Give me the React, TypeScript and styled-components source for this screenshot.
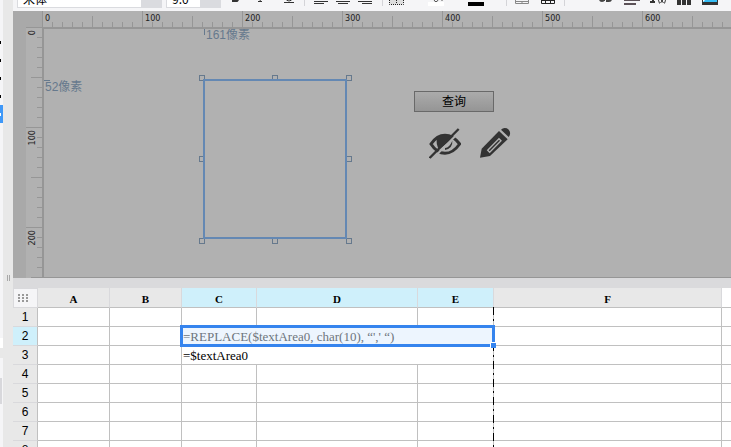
import React from "react";
import styled, { createGlobalStyle, css } from "styled-components";

const GlobalStyle = createGlobalStyle`
  *, *::before, *::after { box-sizing: border-box; }
  body {
    margin: 0;
    overflow: hidden;
    background: #f5f5f7;
    font-family: "Liberation Serif", "Noto Sans CJK SC", serif;
    font-size: 12px;
    color: #000;
  }
  button, select { font: inherit; color: inherit; }
`;

const grid = "#c0c0c0";
const headerLine = "#d9d9dc";
const tick = "#969696";

const Shell = styled.div`
  display: grid;
  grid-template-columns: 3px 10px minmax(0, 1fr);
  height: 100vh;
  overflow: hidden;
`;

/* Side tree */
const TreeEdge = styled.aside`
  display: flex;
  flex-direction: column;
  background: #f5f5f7;
`;
const TreeSpacer = styled.div<{ $h: number }>`
  height: ${(p) => p.$h}px;
`;
const TreeRow = styled.div<{ $active?: boolean }>`
  display: flex;
  align-items: center;
  height: 18px;
  background: ${(p) => (p.$active ? "#3f98f8" : "transparent")};
  &::before {
    content: "";
    width: 1px;
    height: 3px;
    background: ${(p) => (p.$active ? "#fff" : "#000")};
  }
`;
const TreeBlock = styled.div<{ $h: number; $bg: string }>`
  height: ${(p) => p.$h}px;
  background: ${(p) => p.$bg};
`;
const TreeScroll = styled.div`
  height: 26px;
  width: 2px;
  background: #d8d8dc;
`;
const Splitter = styled.div`
  display: flex;
  justify-content: center;
  gap: 1px;
  padding-top: 275px;
  background: #e8e8e8;
`;
const GripLine = styled.span`
  width: 1px;
  height: 6px;
  background: #a8a8a8;
`;

const Main = styled.main`
  display: flex;
  flex-direction: column;
  min-width: 0;
  background: #dadadc;
`;

/* Toolbar */
const Toolbar = styled.div`
  flex: none;
  display: flex;
  align-items: flex-end;
  height: 11px;
  padding: 0 0 3px 4px;
  overflow: hidden;
  background: #f5f5f7;
`;
const Picker = styled.label<{ $w: number }>`
  flex: none;
  display: flex;
  width: ${(p) => p.$w}px;
  height: 22px;
  margin-right: 4px;
  background: #dadbdf;
`;
const PickerSelect = styled.select`
  flex: 1;
  min-width: 0;
  padding: 3px 5px 0;
  appearance: none;
  border: 1px solid #dadbdf;
  border-radius: 0;
  background: #fff;
  font-family: "Noto Sans CJK SC", sans-serif;
`;
const PickerArrow = styled.span`
  width: 20px;
  display: flex;
  align-items: center;
  justify-content: center;
  padding-top: 6px;
  &::after {
    content: "";
    border: 2px solid transparent;
    border-top-color: #8c8c90;
  }
`;
const Tool = styled.button<{ $gap: number }>`
  flex: none;
  display: block;
  margin: 0 0 0 ${(p) => p.$gap}px;
  padding: 0;
  border: 0;
  background: none;
  svg { display: block; }
`;
const Divider = styled.span<{ $gap: number }>`
  flex: none;
  width: 1px;
  height: 20px;
  margin: 0 0 2px ${(p) => p.$gap}px;
  background: #d4d4d8;
`;

/* Form designer */
const Designer = styled.section`
  flex: none;
  display: grid;
  grid-template-columns: 13px 16px minmax(0, 1fr);
  grid-template-rows: 16px 251px;
  margin-bottom: 10px;
  background: #b1b1b1;
`;
const RulerCorner = styled.div`
  grid-column: 1 / 3;
  background: #a9a9a9;
`;
const Gutter = styled.div`
  background: #a9a9a9;
`;
const rulerText = css`
  font-family: "DejaVu Sans Condensed", "DejaVu Sans", sans-serif;
  font-size: 9px;
  line-height: 12px;
  color: #222;
`;
const TopRuler = styled.div`
  display: flex;
  overflow: hidden;
`;
const TopMark = styled.div`
  ${rulerText}
  flex: 0 0 100px;
  padding: 1px 0 0 3px;
  background:
    linear-gradient(${tick}, ${tick}) 0 0 / 1px 16px no-repeat,
    linear-gradient(${tick}, ${tick}) 50px 5px / 1px 11px no-repeat,
    linear-gradient(to right, ${tick} 1px, transparent 1px) 0 100% / 10px 5px repeat-x;
`;
const SideRuler = styled.div`
  display: flex;
  flex-direction: column;
  overflow: hidden;
`;
const SideMark = styled.div`
  ${rulerText}
  flex: 0 0 100px;
  padding: 3px 0 0;
  background:
    linear-gradient(${tick}, ${tick}) 0 0 / 16px 1px no-repeat,
    linear-gradient(${tick}, ${tick}) 5px 50px / 11px 1px no-repeat,
    linear-gradient(to bottom, ${tick} 1px, transparent 1px) 100% 0 / 5px 10px repeat-y;
  span {
    display: block;
    writing-mode: vertical-rl;
    transform: rotate(180deg);
    width: 12px;
  }
`;
const Canvas = styled.div`
  position: relative;
  border: solid #969696;
  border-width: 2px 0 1px 2px;
  overflow: hidden;
`;
const Distance = styled.span<{ $x: number; $y: number }>`
  position: absolute;
  left: ${(p) => p.$x}px;
  top: ${(p) => p.$y}px;
  font-family: "Liberation Sans", "Noto Sans CJK SC", sans-serif;
  line-height: 14px;
  color: #66798d;
  white-space: nowrap;
`;
const GuideTick = styled.i<{ $x: number; $y: number; $w: number; $h: number }>`
  position: absolute;
  left: ${(p) => p.$x}px;
  top: ${(p) => p.$y}px;
  width: ${(p) => p.$w}px;
  height: ${(p) => p.$h}px;
  background: #66798d;
`;
const Frame = styled.div`
  position: absolute;
  left: 159px;
  top: 50px;
  width: 144px;
  height: 160px;
  &::after {
    content: "";
    position: absolute;
    inset: 0;
    border: 2px solid #6488b3;
  }
`;
const Handle = styled.i<{ $x: number; $y: number }>`
  position: absolute;
  left: ${(p) => p.$x}px;
  top: ${(p) => p.$y}px;
  width: 6px;
  height: 6px;
  border: 1px solid #66798d;
`;
const QueryButton = styled.button`
  position: absolute;
  left: 370px;
  top: 62px;
  width: 80px;
  height: 21px;
  padding: 0 0 2px;
  border: 1px solid #696969;
  background: linear-gradient(#ababab, #959595);
  font-family: "Noto Sans CJK SC", sans-serif;
  line-height: 17px;
`;
const IconButton = styled.button<{ $x: number; $y: number }>`
  position: absolute;
  left: ${(p) => p.$x}px;
  top: ${(p) => p.$y}px;
  padding: 0;
  border: 0;
  background: none;
  svg { display: block; }
`;

/* Spreadsheet */
const Sheet = styled.section`
  flex: 1;
  min-height: 0;
  overflow: hidden;
  background: #fff;
`;
const Table = styled.table`
  width: 100%;
  table-layout: fixed;
  border-collapse: separate;
  border-spacing: 0;
`;
const Col = styled.col<{ $w?: number }>`
  width: ${(p) => (p.$w ? `${p.$w}px` : "auto")};
`;
const ColHead = styled.th<{ $on?: boolean; $break?: boolean }>`
  position: relative;
  height: 20px;
  padding: 3px 0 0;
  border-right: 1px solid ${headerLine};
  border-bottom: 1px solid ${grid};
  background: ${(p) => (p.$on ? "#cff0fb" : "#e8e8e8")};
  font-size: 11px;
  line-height: 14px;
  ${(p) =>
    p.$break &&
    css`
      &::after {
        content: "";
        position: absolute;
        z-index: 1;
        top: 100%;
        right: -1px;
        width: 1px;
        height: 100vh;
        background: repeating-linear-gradient(
          #000 0 8px, transparent 8px 12px, #000 12px 14px, transparent 14px 18px
        );
      }
    `}
`;
const BlankHead = styled.td`
  border-bottom: 1px solid ${grid};
`;
const CornerHead = styled.td`
  height: 20px;
  padding: 0 0 0 4px;
  border: 1px solid ${headerLine};
  background: #f5f5f7;
  svg { display: block; }
`;
const RowHead = styled.th<{ $on?: boolean }>`
  height: 19px;
  padding: 1px 0 0;
  border-right: 1px solid ${grid};
  border-bottom: 1px solid ${headerLine};
  background: ${(p) => (p.$on ? "#cff0fb" : "#e8e8e8")};
  font-family: "Liberation Sans", sans-serif;
  font-size: 12px;
  font-weight: 400;
  line-height: 17px;
`;
const Cell = styled.td<{ $selected?: boolean }>`
  position: relative;
  height: 19px;
  padding: 2px 0 0 1px;
  border-right: 1px solid ${grid};
  border-bottom: 1px solid ${grid};
  font-size: 13px;
  line-height: 16px;
  white-space: nowrap;
  &:last-child { border-right: 0; }
  ${(p) =>
    p.$selected &&
    css`
      background: #edf5fe;
      color: #6e757d;
      &::after {
        content: "";
        position: absolute;
        z-index: 2;
        inset: -2px;
        border: 3px solid #3584ee;
      }
    `}
`;
const FillHandle = styled.i`
  position: absolute;
  z-index: 3;
  right: -3px;
  bottom: -3px;
  width: 5px;
  height: 5px;
  background: #3584ee;
  box-shadow: -1px -1px 0 #fff;
`;

const handles: [number, number][] = [
  [-4, -4], [69, -4], [143, -4],
  [-4, 77], [143, 77],
  [-4, 159], [69, 159], [143, 159],
];

const columns = [
  { name: "A", w: 72 },
  { name: "B", w: 72 },
  { name: "C", w: 75, on: true },
  { name: "D", w: 161, on: true },
  { name: "E", w: 76, on: true, pageBreak: true },
  { name: "F", w: 228 },
];

const formulas: Record<number, string> = {
  2: `=REPLACE($textArea0, char(10), “',' “)`,
  3: "=$textArea0",
};

function AlignIcon({ x }: { x: number }) {
  return (
    <svg width="14" height="14" viewBox="0 0 14 14" stroke="#333">
      <path d={`M0 3.5h14M${x} 5.5h10M0 7.5h14M${x} 9.5h10`} />
    </svg>
  );
}

function ToolbarIcons() {
  return (
    <>
      <Tool $gap={7} aria-label="Bold">
        <svg width="9" height="14" viewBox="0 0 9 14"><path d="M1 0h4a3 3 0 0 1 1 4 3 3 0 0 1-1 3H1z" fill="none" stroke="#333" strokeWidth="2" /></svg>
      </Tool>
      <Tool $gap={17} aria-label="Italic">
        <svg width="6" height="14" viewBox="0 0 6 14"><path d="M3 0L2 8M0 7.5h4" fill="none" stroke="#333" /></svg>
      </Tool>
      <Tool $gap={20} aria-label="Underline">
        <svg width="10" height="14" viewBox="0 0 10 14"><path d="M2 0v4q0 3 3 3t3-3V0M0 8.5h10" fill="none" stroke="#333" /></svg>
      </Tool>
      <Divider $gap={10} />
      <Tool $gap={9} aria-label="Align left"><AlignIcon x={0} /></Tool>
      <Tool $gap={8} aria-label="Align center"><AlignIcon x={2} /></Tool>
      <Tool $gap={8} aria-label="Align right"><AlignIcon x={4} /></Tool>
      <Divider $gap={10} />
      <Tool $gap={6} aria-label="Borders">
        <svg width="15" height="12" viewBox="0 0 15 12" fill="none" stroke="#222" strokeDasharray="1 1"><path fill="#ddd" d="M.5 0v8.5h14V0M7.5 0v8" /></svg>
      </Tool>
      <Tool $gap={24} aria-label="Background color">
        <svg width="16" height="14" viewBox="0 0 16 14"><path d="M0 8h16v4H0z" fill="#fff" /><path d="M5 4l2 3.5h2l2-3M14 2v5" fill="none" stroke="#555" /></svg>
      </Tool>
      <Tool $gap={24} aria-label="Text color">
        <svg width="16" height="14" viewBox="0 0 16 14"><path d="M0 8h16v4H0z" fill="#000" /></svg>
      </Tool>
      <Divider $gap={22} />
      <Tool $gap={8} aria-label="Merge cells">
        <svg width="14" height="14" viewBox="0 0 14 14" fill="none" stroke="#888"><path d="M.5 0v9.5h13V0M7 7v3M0 7.5h14" /><path d="M1 0h12v6H1z" fill="#aaa" stroke="none" /></svg>
      </Tool>
      <Tool $gap={12} aria-label="Split cells">
        <svg width="14" height="14" viewBox="0 0 14 14" fill="none" stroke="#222"><path d="M.5 0v9.5h13V0M4.5 0v10M9.5 0v10M0 6.5h14" /></svg>
      </Tool>
      <Divider $gap={9} />
      <Tool $gap={34} aria-label="Text">
        <svg width="13" height="14" viewBox="0 0 13 14" fill="none" stroke="#444" strokeWidth="2"><path d="M1 5q0 2 2 2t2-2V1v6M8 0v7h2q2 0 2-2t-2-3" /></svg>
      </Tool>
      <Tool $gap={12} aria-label="Rich text">
        <svg width="16" height="14" viewBox="0 0 16 14" stroke="#5c5258" strokeWidth="2"><path d="M0 6h16M0 10h12M0 2h12" /></svg>
      </Tool>
      <Tool $gap={10} aria-label="Formula">
        <svg width="16" height="14" viewBox="0 0 16 14" fill="none" stroke="#333"><path strokeWidth="2" d="M3 0v8M0 8h5" /><path d="M9.5 3q-2 3 0 6.5M10.5 5l3 4M13.5 5l-3 4M14.5 3q2 3 0 6.5" /></svg>
      </Tool>
      <Tool $gap={11} aria-label="Chart">
        <svg width="14" height="14" viewBox="0 0 14 14" fill="#333"><path d="M0 0h4v11H0zM5 3h4v8H5zM10 1h4v10h-4z" /></svg>
      </Tool>
      <Tool $gap={11} aria-label="Image">
        <svg width="16" height="14" viewBox="0 0 16 14"><path d="M0 0h16v11H0z" fill="#333" /><path d="M1 0h14v8H1z" fill="#35bdf5" /><path d="M1 4l3 1-3 3z" fill="#fff" /></svg>
      </Tool>
    </>
  );
}

export default function App() {
  return (
    <>
      <GlobalStyle />
      <Shell>
        <TreeEdge>
          <TreeSpacer $h={33} />
          <TreeRow />
          <TreeRow />
          <TreeRow />
          <TreeRow />
          <TreeRow $active />
          <TreeSpacer $h={215} />
          <TreeBlock $h={10} $bg="#fff" />
          <TreeBlock $h={10} $bg="#e8e8e8" />
          <TreeSpacer $h={20} />
          <TreeScroll />
        </TreeEdge>
        <Splitter>
          <GripLine />
          <GripLine />
        </Splitter>
        <Main>
          <Toolbar>
            <Picker $w={145}>
              <PickerSelect aria-label="Font"><option>宋体</option></PickerSelect>
              <PickerArrow />
            </Picker>
            <Picker $w={55}>
              <PickerSelect aria-label="Font size"><option>9.0</option></PickerSelect>
              <PickerArrow />
            </Picker>
            <ToolbarIcons />
          </Toolbar>

          <Designer>
            <RulerCorner />
            <TopRuler>
              {[0, 100, 200, 300, 400, 500, 600].map((n) => (
                <TopMark key={n}>{n}</TopMark>
              ))}
            </TopRuler>
            <Gutter />
            <SideRuler>
              {[0, 100, 200].map((n) => (
                <SideMark key={n}><span>{n}</span></SideMark>
              ))}
            </SideRuler>
            <Canvas>
              <GuideTick $x={160} $y={0} $w={1} $h={6} />
              <Distance $x={162} $y={-1}>161像素</Distance>
              <GuideTick $x={0} $y={51} $w={6} $h={1} />
              <Distance $x={1} $y={51}>52像素</Distance>
              <Frame>
                {handles.map(([x, y]) => (
                  <Handle key={`${x},${y}`} $x={x} $y={y} />
                ))}
              </Frame>
              <QueryButton>查询</QueryButton>
              <IconButton $x={385} $y={99} aria-label="Hide">
                <svg width="32" height="31" viewBox="0 0 96 93">
                  <path d="M6 48Q24 22 48 22T92 48Q72 76 48 76T6 48z" fill="none" stroke="#333" strokeWidth="9" />
                  <path d="M24 28Q44 18 64 26L70 34L30 64Q20 50 24 28z" fill="#333" />
                  <path d="M48 60Q62 58 70 38Q72 60 48 66z" fill="#333" />
                  <path d="M5 98L97 6" stroke="#b1b1b1" strokeWidth="6" />
                  <path d="M2 90L89 3" stroke="#333" strokeWidth="7" />
                </svg>
              </IconButton>
              <IconButton $x={436} $y={98} aria-label="Edit">
                <svg width="31" height="31" viewBox="0 0 93 93">
                  <path d="M0 92L5 65L57 12L83 37L30 87z" fill="#333" />
                  <path d="M63 8A14 14 0 1 1 86 30z" fill="#333" />
                  <path d="M23 70L57 35L63 41L29 76z" fill="#333" stroke="#b1b1b1" strokeWidth="4" />
                </svg>
              </IconButton>
            </Canvas>
          </Designer>

          <Sheet>
            <Table>
              <colgroup>
                <Col $w={25} />
                {columns.map((c) => <Col key={c.name} $w={c.w} />)}
                <Col />
              </colgroup>
              <thead>
                <tr>
                  <CornerHead>
                    <svg width="10" height="8" viewBox="0 0 10 8" stroke="#999" strokeWidth="2" strokeDasharray="2 2">
                      <path d="M0 1h10M0 4h10M0 7h10" />
                    </svg>
                  </CornerHead>
                  {columns.map((c) => (
                    <ColHead key={c.name} scope="col" $on={c.on} $break={c.pageBreak}>{c.name}</ColHead>
                  ))}
                  <BlankHead />
                </tr>
              </thead>
              <tbody>
                {[1, 2, 3, 4, 5, 6, 7, 8].map((n) => (
                  <tr key={n}>
                    <RowHead scope="row" $on={n === 2}>{n}</RowHead>
                    <Cell />
                    <Cell />
                    {formulas[n] ? (
                      <Cell colSpan={3} $selected={n === 2}>
                        {formulas[n]}
                        {n === 2 && <FillHandle />}
                      </Cell>
                    ) : (
                      <>
                        <Cell />
                        <Cell />
                        <Cell />
                      </>
                    )}
                    <Cell />
                    <Cell />
                  </tr>
                ))}
              </tbody>
            </Table>
          </Sheet>
        </Main>
      </Shell>
    </>
  );
}
